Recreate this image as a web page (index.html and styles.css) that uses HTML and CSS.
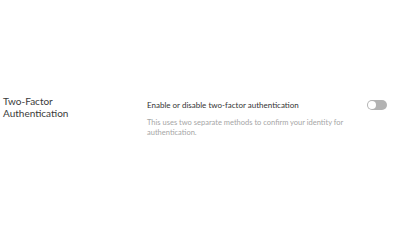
FILE: index.html
```html
<!DOCTYPE html>
<html lang="en">
<head>
    <meta charset="UTF-8">
    <title>Security settings</title>
    <link rel="stylesheet" href="styles.css">
</head>
<body>
    <main class="settings">
        <section class="setting-row">
            <h2 class="setting-title">Two-Factor Authentication</h2>
            <div class="setting-body">
                <div class="setting-head">
                    <p class="setting-label">Enable or disable two-factor authentication</p>
                    <label class="switch">
                        <input type="checkbox">
                        <span class="slider"></span>
                    </label>
                </div>
                <p class="setting-desc">This uses two separate methods to confirm your identity for authentication.</p>
            </div>
        </section>
    </main>
</body>
</html>
```

FILE: styles.css
```css
* {
    margin: 0;
    padding: 0;
    box-sizing: border-box;
}

body {
    font-family: 'Lato', 'Liberation Sans', sans-serif;
    background: #fff;
    color: #333;
}

.settings {
    padding: 95px 12px 0 3px;
}

.setting-row {
    display: flex;
    align-items: flex-start;
}

.setting-title {
    flex: 0 0 144px;
    padding-right: 60px;
    font-size: 10px;
    font-weight: 400;
    line-height: 12px;
    color: #3a3a3a;
}

.setting-body {
    flex: 1;
    padding-top: 5px;
}

.setting-head {
    display: flex;
    justify-content: space-between;
    align-items: center;
}

.setting-label {
    font-size: 8px;
    line-height: 10px;
    color: #333;
}

.setting-desc {
    margin-top: 8px;
    max-width: 220px;
    font-size: 7.5px;
    line-height: 10px;
    color: #a6a6a6;
}

/* toggle */
.switch {
    position: relative;
    display: inline-block;
    width: 20px;
    height: 10px;
    margin-right: 1px;
}

.switch input {
    display: none;
}

.slider {
    position: absolute;
    inset: 0;
    background: #b3b3b3;
    border-radius: 5px;
}

.slider:before {
    content: '';
    position: absolute;
    left: 1px;
    top: 1px;
    width: 8px;
    height: 8px;
    border-radius: 50%;
    background: #fff;
}
```
